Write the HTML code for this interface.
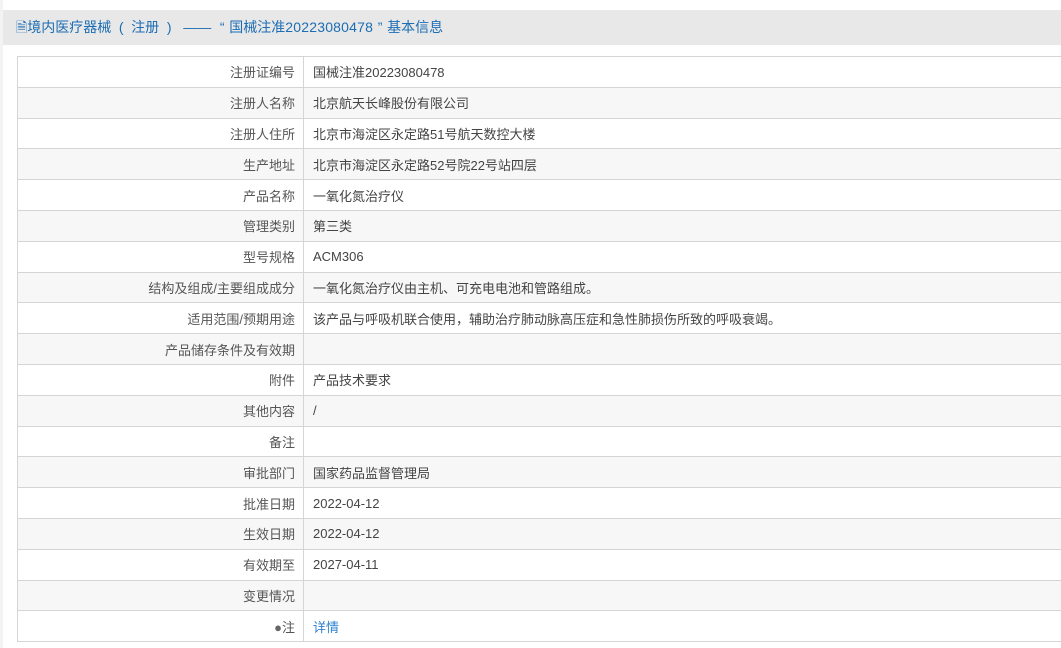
<!DOCTYPE html>
<html><head><meta charset="utf-8"><style>
body{margin:0;width:1061px;height:648px;background:#fff;overflow:hidden;font-family:"Liberation Sans","Noto Sans CJK SC",sans-serif;font-size:13px;position:relative}
.strip{position:absolute;left:0;top:0;width:3px;height:648px;background:#f3f3f3}
.hd{position:absolute;left:3px;top:10px;width:1058px;height:35px;background:#e8e8e8;color:#1c6db3;line-height:35px;font-size:14px;font-family:"Liberation Sans","Noto Sans CJK SC",sans-serif;white-space:nowrap}
.hd>span{margin-left:13px}
.p{display:inline-block;text-align:center}
.d{letter-spacing:0.2px}
table{position:absolute;left:17px;top:56px;width:1050px;border-collapse:collapse}
td{border:1px solid #d5d5d5;height:29.8px;padding:0;color:#444;white-space:nowrap}
td.l{width:277px;text-align:right;padding-right:8px;color:#555}
td.v{padding-left:9px}
tr:nth-child(even) td{background:#f7f7f7}
a{color:#2f7fd1;text-decoration:none}
</style></head><body>
<div class="strip"></div>
<div class="hd"><span>🗎境内医疗器械<span class="p" style="width:20px">(</span>注册<span class="p" style="width:20px">)</span><span class="p" style="width:36px">——</span><span class="p" style="width:14px">“</span>国械注准<span class="d">20223080478</span><span class="p" style="width:14px">”</span>基本信息</span></div>
<table>
<tr><td class="l">注册证编号</td><td class="v">国械注准20223080478</td></tr>
<tr><td class="l">注册人名称</td><td class="v">北京航天长峰股份有限公司</td></tr>
<tr><td class="l">注册人住所</td><td class="v">北京市海淀区永定路51号航天数控大楼</td></tr>
<tr><td class="l">生产地址</td><td class="v">北京市海淀区永定路52号院22号站四层</td></tr>
<tr><td class="l">产品名称</td><td class="v">一氧化氮治疗仪</td></tr>
<tr><td class="l">管理类别</td><td class="v">第三类</td></tr>
<tr><td class="l">型号规格</td><td class="v">ACM306</td></tr>
<tr><td class="l">结构及组成/主要组成成分</td><td class="v">一氧化氮治疗仪由主机、可充电电池和管路组成。</td></tr>
<tr><td class="l">适用范围/预期用途</td><td class="v">该产品与呼吸机联合使用，辅助治疗肺动脉高压症和急性肺损伤所致的呼吸衰竭。</td></tr>
<tr><td class="l">产品储存条件及有效期</td><td class="v"></td></tr>
<tr><td class="l">附件</td><td class="v">产品技术要求</td></tr>
<tr><td class="l">其他内容</td><td class="v">/</td></tr>
<tr><td class="l">备注</td><td class="v"></td></tr>
<tr><td class="l">审批部门</td><td class="v">国家药品监督管理局</td></tr>
<tr><td class="l">批准日期</td><td class="v">2022-04-12</td></tr>
<tr><td class="l">生效日期</td><td class="v">2022-04-12</td></tr>
<tr><td class="l">有效期至</td><td class="v">2027-04-11</td></tr>
<tr><td class="l">变更情况</td><td class="v"></td></tr>
<tr><td class="l"><span style="color:#666">●</span>注</td><td class="v"><a>详情</a></td></tr>
</table>
</body></html>
